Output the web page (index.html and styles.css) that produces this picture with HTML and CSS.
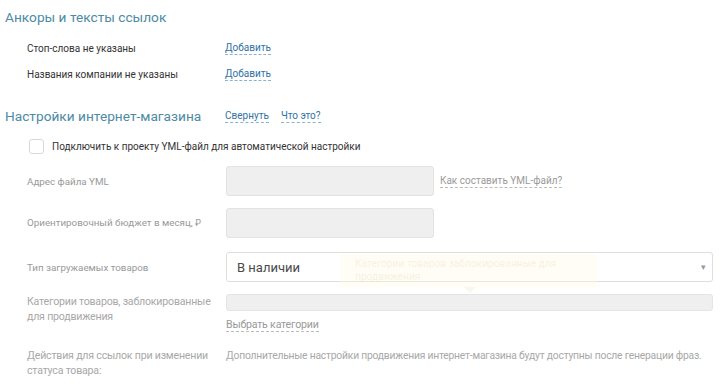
FILE: index.html
```html
<!DOCTYPE html>
<html lang="ru">
<head>
<meta charset="utf-8">
<link rel="stylesheet" href="styles.css">
</head>
<body>
<div class="page">
  <h2 class="title t1">Анкоры и тексты ссылок</h2>
  <div class="kv">
    <div class="kv-row"><span class="kv-label">Стоп-слова не указаны</span><a class="dash link">Добавить</a></div>
    <div class="kv-row"><span class="kv-label">Названия компании не указаны</span><a class="dash link">Добавить</a></div>
  </div>

  <div class="title-row">
    <h2 class="title">Настройки интернет-магазина</h2>
    <a class="dash link">Свернуть</a>
    <a class="dash link">Что это?</a>
  </div>

  <label class="check-row"><span class="box"></span><span class="check-text">Подключить к проекту YML-файл для автоматической настройки</span></label>

  <div class="form">
    <div class="f-row r-yml">
      <div class="f-label">Адрес файла YML</div>
      <div class="f-ctrl inline"><div class="input"></div><a class="dash hint">Как составить YML-файл?</a></div>
    </div>
    <div class="f-row r-budget">
      <div class="f-label">Ориентировочный бюджет в месяц, <span class="rub">₽</span></div>
      <div class="f-ctrl"><div class="input"></div></div>
    </div>
    <div class="f-row r-type">
      <div class="f-label">Тип загружаемых товаров</div>
      <div class="f-ctrl"><div class="select"><span>В наличии</span><span class="arrow">▾</span></div></div>
    </div>
    <div class="f-row r-cat">
      <div class="f-label cond">Категории товаров, заблокированные<br>для продвижения</div>
      <div class="f-ctrl"><div class="bar"></div><a class="dash hint cond pick">Выбрать категории</a></div>
    </div>
    <div class="f-row r-act">
      <div class="f-label cond">Действия для ссылок при изменении<br>статуса товара:</div>
      <div class="f-ctrl cond note">Дополнительные настройки продвижения интернет-магазина будут доступны после генерации фраз.</div>
    </div>
  </div>

  <div class="ghost-tip">Категории товаров заблокированные для продвижения<span class="ghost-arrow"></span></div>
</div>
</body>
</html>
```
FILE: styles.css
```css
* { box-sizing: border-box; }
html, body { margin: 0; padding: 0; background: #fff; }
body { font-family: Roboto, "Open Sans", sans-serif; font-size: 10px; color: #333; width: 725px; height: 388px; overflow: hidden; }
.page { position: relative; padding: 0 12px 0 5px; }
.title { margin: 0; font-weight: 400; font-size: 13.7px; line-height: 20px; color: #4d8aa5; white-space: nowrap; }
.t1 { padding-top: 7px; }
.kv { padding-left: 22px; margin-top: 8px; }
.kv-row { display: flex; align-items: center; height: 26px; }
.kv-label { width: 198px; }
.link { color: #2f73a6; text-decoration: none; cursor: pointer; }
.dash { border-bottom: 1px dashed currentColor; line-height: 12px; }
.link.dash { border-bottom-color: #8ab3d3; }
.title-row { display: flex; align-items: center; margin-top: 19px; height: 20px; }
.title-row .title { width: 220px; }
.title-row .link { margin-right: 12px; }
.check-row { display: flex; align-items: center; margin: 12px 0 0 24px; height: 16px; }
.box { width: 15px; height: 15px; border: 1px solid #d8d8d8; border-radius: 3px; margin-right: 8px; background: #fff; }
.form { padding-left: 22px; margin-top: 12px; }
.f-row { display: flex; }
.f-label { width: 199px; flex-shrink: 0; color: #999; line-height: 15px; font-size: 9.8px; }
.rub { font-size: 9px; }
.f-ctrl { flex: 1; min-width: 0; }
.inline { display: flex; align-items: center; }
.input { width: 208px; height: 30px; background: #efefef; border: 1px solid #e2e2e2; border-radius: 3px; }
.hint { color: #9a9a9a; margin-left: 6px; border-bottom-color: #bbb; }
.r-yml .f-label, .r-budget .f-label, .r-type .f-label { align-self: center; }
.r-budget { margin-top: 12px; }
.r-type { margin-top: 14px; }
.select { height: 30px; border: 1px solid #dedede; border-radius: 3px; background: #fff; display: flex; align-items: center; justify-content: space-between; padding: 0 6px 0 10px; font-size: 13px; color: #4a4a4a; }
.arrow { font-size: 9px; color: #999; }
.r-cat { margin-top: 12px; }
.bar { height: 17px; background: #efefef; border: 1px solid #e4e4e4; border-radius: 3px; }
.cond { font-size: 10.6px; letter-spacing: -0.2px; white-space: nowrap; }
.r-cat .f-label, .r-act .f-label { color: #a8a8a8; }
.pick { display: inline-block; margin: 8px 0 0 0; color: #999; }
.r-act { margin-top: 16px; }
.note { color: #a8a8a8; line-height: 15px; font-size: 10.3px; letter-spacing: -0.2px; }
.ghost-tip { position: absolute; left: 340px; top: 254px; width: 257px; height: 33px; padding: 3px 15px; background: rgba(255, 250, 225, 0.35); color: rgba(225, 212, 170, 0.3); font-size: 10.2px; line-height: 13px; }
.ghost-arrow { position: absolute; left: 124px; bottom: -6px; width: 0; height: 0; border-left: 6px solid transparent; border-right: 6px solid transparent; border-top: 6px solid rgba(240, 235, 215, 0.45); }
```
